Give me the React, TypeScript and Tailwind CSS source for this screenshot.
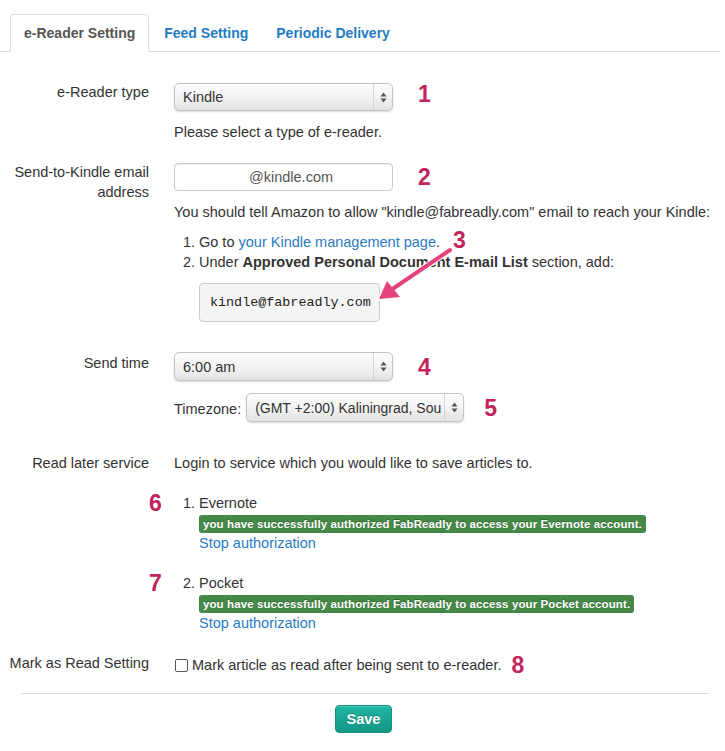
import React from "react";

const NUM = "font-bold text-[23px] leading-[24px] text-[#c3245d]";

function UpDown() {
  return (
    <svg width="7" height="11" viewBox="0 0 7 11">
      <path d="M3.5 0.5 L6.5 4.5 L0.5 4.5 Z" fill="#555" />
      <path d="M3.5 10.5 L6.5 6.5 L0.5 6.5 Z" fill="#555" />
    </svg>
  );
}

function Select({ value, width }: { value: string; width: string }) {
  return (
    <div
      className={`${width} flex items-center rounded-[5px] border border-[#c4c4c4] bg-gradient-to-b from-[#fdfdfd] via-[#f3f3f3] to-[#e3e3e3] shadow-[0_1px_2px_rgba(0,0,0,0.15)] overflow-hidden`}
    >
      <div className="flex-1 min-w-0 pl-[8px] whitespace-nowrap overflow-hidden text-[#333]">{value}</div>
      <div className="w-[19px] shrink-0 h-full flex items-center justify-center border-l border-[#d4d4d4]">
        <UpDown />
      </div>
    </div>
  );
}

function Label({ children }: { children: React.ReactNode }) {
  return <div className="w-[149px] shrink-0 text-right">{children}</div>;
}

const BADGE =
  "w-fit mt-[2px] rounded-[3px] bg-[#468847] px-[4px] py-[2px] text-[11.5px] tracking-[0.1px] leading-[14px] font-bold text-white [text-shadow:0_-1px_0_rgba(0,0,0,0.25)]";

export default function App() {
  return (
    <div
      className="w-[725px] h-[751px] bg-white text-[14.5px] leading-[20px] text-[#333] overflow-hidden"
      style={{ fontFamily: '"Liberation Sans", Arial, sans-serif' }}
    >
      {/* Tabs */}
      <div className="flex pt-[14px] pl-[10px] mr-[5px] border-b border-[#ddd] text-[14px]">
        <div className="-mb-px mr-[2px] px-[13px] py-[8px] border border-[#ddd] border-b-white rounded-t-[4px] bg-white font-bold text-[#555]">
          e-Reader Setting
        </div>
        <div className="-mb-px mr-[1px] pl-[12px] pr-[13px] py-[8px] border border-transparent font-bold text-[#1f7cc4]">
          Feed Setting
        </div>
        <div className="-mb-px mr-[2px] px-[12px] py-[8px] border border-transparent font-bold text-[#1f7cc4]">
          Periodic Delivery
        </div>
      </div>

      <div className="pt-[30px]">
        {/* Row 1 */}
        <div className="flex mb-[21px]">
          <Label>e-Reader type</Label>
          <div className="ml-[25px]">
            <div className="flex items-center">
              <Select value="Kindle" width="w-[219px] h-[28px]" />
              <span className={`${NUM} ml-[25px] mb-[6px]`}>1</span>
            </div>
            <div className="mt-[10px]">Please select a type of e-reader.</div>
          </div>
        </div>

        {/* Row 2 */}
        <div className="flex mb-[30px]">
          <div className="w-[149px] shrink-0 text-right -mt-[1px]">Send-to-Kindle email address</div>
          <div className="ml-[25px]">
            <div className="flex items-center">
              <div className="w-[219px] h-[28px] rounded-[4px] border border-[#ccc] bg-white shadow-[inset_0_1px_1px_rgba(0,0,0,0.075)] flex items-center pl-[74px] text-[#555]">
                @kindle.com
              </div>
              <span className={`${NUM} ml-[25px]`}>2</span>
            </div>
            <p className="mt-[11px] whitespace-nowrap">
              You should tell Amazon to allow "kindle@fabreadly.com" email to reach your Kindle:
            </p>
            <ol className="relative mt-[10px] list-decimal pl-[25px]">
              <li>
                Go to <span className="text-[#2a7bbf]">your Kindle management page</span>.
              </li>
              <li>
                Under <b>Approved Personal Document E-mail List</b> section, add:
                <div
                  className="mt-[11px] w-[181px] rounded-[4px] border border-[#ccc] bg-[#f5f5f5] px-[10px] py-[9px] leading-[19px] text-[13.4px] text-[#222]"
                  style={{ fontFamily: '"Liberation Mono", "DejaVu Sans Mono", monospace' }}
                >
                  kindle@fabreadly.com
                </div>
              </li>
              <span className={`${NUM} absolute left-[279px] top-[-4px]`}>3</span>
              <svg
                className="absolute left-[201px] top-[13px]"
                width="80"
                height="60"
                viewBox="0 0 80 60"
              >
                <line x1="75" y1="5" x2="16" y2="45" stroke="#fff" strokeWidth="6" strokeLinecap="round" />
                <polygon points="4,54 12,36 25,52" fill="#fff" stroke="#fff" strokeWidth="3" strokeLinejoin="round" />
                <line x1="75" y1="5" x2="16" y2="45" stroke="#e6427d" strokeWidth="4" strokeLinecap="round" />
                <polygon points="4,54 12,36 25,52" fill="#e6427d" />
              </svg>
            </ol>
          </div>
        </div>

        {/* Row 3 */}
        <div className="flex mb-[31px]">
          <div className="w-[149px] shrink-0 text-right pt-[1px]">Send time</div>
          <div className="ml-[25px]">
            <div className="flex items-center">
              <Select value="6:00 am" width="w-[219px] h-[29px]" />
              <span className={`${NUM} ml-[25px]`}>4</span>
            </div>
            <div className="flex items-center mt-[12px]">
              <span className="mr-[5px] mt-[3px]">Timezone:</span>
              <Select value="(GMT +2:00) Kaliningrad, Sou" width="w-[218px] h-[29px] text-[14px]" />
              <span className={`${NUM} ml-[20px]`}>5</span>
            </div>
          </div>
        </div>

        {/* Row 4 */}
        <div className="flex mb-[20px]">
          <Label>Read later service</Label>
          <div className="ml-[25px]">
            <p>Login to service which you would like to save articles to.</p>
            <ol className="mt-[20px] list-decimal pl-[25px]">
              <li className="relative">
                <span className={`${NUM} absolute left-[-50px] top-[-2px]`}>6</span>
                Evernote
                <div className={BADGE}>
                  you have successfully authorized FabReadly to access your Evernote account.
                </div>
                <div className="text-[#2a7bbf]">Stop authorization</div>
              </li>
              <li className="relative mt-[20px]">
                <span className={`${NUM} absolute left-[-50px] top-[-2px]`}>7</span>
                Pocket
                <div className={BADGE}>
                  you have successfully authorized FabReadly to access your Pocket account.
                </div>
                <div className="text-[#2a7bbf]">Stop authorization</div>
              </li>
            </ol>
          </div>
        </div>

        {/* Row 5 */}
        <div className="flex">
          <Label>Mark as Read Setting</Label>
          <div className="ml-[25px] flex items-center">
            <span className="ml-[1px] w-[13px] h-[13px] border border-[#555] rounded-[2px] bg-white" />
            <span className="ml-[4px]">Mark article as read after being sent to e-reader.</span>
            <span className={`${NUM} ml-[10px]`}>8</span>
          </div>
        </div>

        <div className="mt-[16px] ml-[21px] mr-[16px] border-t border-[#ddd]" />

        <div className="flex justify-center mt-[11px]">
          <div className="ml-[2px] w-[57px] h-[28px] flex items-center justify-center rounded-[4px] border border-[#14907f] bg-gradient-to-b from-[#20b8a3] to-[#139585] text-white font-bold [text-shadow:0_-1px_0_rgba(0,0,0,0.25)] shadow-[inset_0_1px_0_rgba(255,255,255,0.2)]">
            Save
          </div>
        </div>
      </div>
    </div>
  );
}
